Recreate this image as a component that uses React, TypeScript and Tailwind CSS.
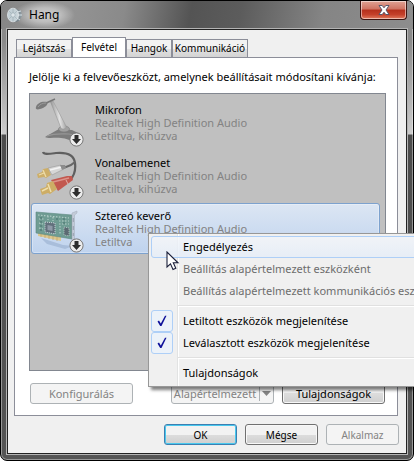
import React, { useState } from "react";
import clsx from "clsx";

type DeviceKind = "mic" | "line" | "card";

const tabs = [
  { id: "playback", label: "Lejátszás", width: "w-14" },
  { id: "recording", label: "Felvétel", width: "w-[54px]" },
  { id: "sounds", label: "Hangok", width: "w-[46px]" },
  { id: "communication", label: "Kommunikáció", width: "w-[76px]" },
];

const devices: { kind: DeviceKind; name: string; status: string }[] = [
  { kind: "mic", name: "Mikrofon", status: "Letiltva, kihúzva" },
  { kind: "line", name: "Vonalbemenet", status: "Letiltva, kihúzva" },
  { kind: "card", name: "Sztereó keverő", status: "Letiltva" },
];

const SpeakerIcon = () => (
  <svg width="16" height="16" viewBox="0 0 16 16" aria-hidden="true">
    <path d="M9 2 L14 4 L15 9 L12 14 L8 15 Z" fill="#6f7f88" />
    <path d="M10 5 L14 4 M11 8 L15 8 M10 11 L13 13" stroke="#cfdde3" strokeWidth="1" />
    <ellipse cx="6" cy="8" rx="5.5" ry="6.8" fill="#c3d0d6" stroke="#dfe6ea" strokeWidth="0.8" />
    <path d="M2 4 L10 12 M2 12 L10 4 M6 1.5 V14.5" stroke="#a3b2ba" strokeWidth="0.8" />
    <circle cx="6" cy="8" r="2.2" fill="#dde6ea" stroke="#94a4ac" strokeWidth="0.6" />
  </svg>
);

// Small round "disabled" badge in the corner of every device icon
const DisabledBadge = () => (
  <g>
    <circle cx="41.5" cy="41.5" r="6.6" fill="#ececec" stroke="#777" strokeWidth="1" />
    <path d="M39.5 37 H43.5 V41 H46 L41.5 46 L37 41 H39.5 Z" fill="#2d2d2d" />
  </g>
);

const MicArt = () => (
  <>
    <defs>
      <linearGradient id="neck" x1="0" x2="1" y1="0.4" y2="0.2">
        <stop offset="0" stopColor="#8a8a8a" />
        <stop offset="0.5" stopColor="#e2e2e2" />
        <stop offset="1" stopColor="#8a8a8a" />
      </linearGradient>
    </defs>
    <path d="M10 39 C15 36 20 33 24 31 L37 32 L45 36 L41 44 C36 43 31 40 26 40 C20 39 14 41 10 39 Z" fill="#7c7c7c" />
    <path d="M12 38 C20 35 28 36 34 36 L43 38" stroke="#969696" strokeWidth="1.2" fill="none" />
    <ellipse cx="29" cy="31" rx="5.5" ry="3" fill="#a2a2a2" stroke="#7a7a7a" strokeWidth="0.6" />
    <path d="M15.5 4 L18 3 L31.5 29 C30 31.5 27 31.5 26 30 Z" fill="url(#neck)" stroke="#919191" strokeWidth="0.5" />
    <path d="M9 6 L20 1" stroke="#767676" strokeWidth="1.5" />
    <path d="M1 9 C2 5 7 3 12 4 C14 6 10 10 5 11 C2 12 0 11 1 9 Z" fill="#7a7a7a" />
    <path d="M3 9 C5 6 8 5 11 5" stroke="#9a9a9a" strokeWidth="1" fill="none" />
  </>
);

const LineArt = () => (
  <>
    <path d="M8 1 C9 4 14 3 21 2 C33 1 39 4 40 12 C41 20 39 25 35 29" stroke="#5f5f5f" strokeWidth="2.2" fill="none" />
    <path d="M40 11 C36 15 33 15 28 17" stroke="#686868" strokeWidth="2" fill="none" />
    <path d="M13 17 L26 14 L29 18 L17 24 Z" fill="#d6d6d6" stroke="#999" strokeWidth="0.6" />
    <path d="M15 19 L27 16" stroke="#f4f4f4" strokeWidth="1.6" />
    <path d="M25 14 L30 14 L31 17 L27 19 Z" fill="#8c8c8c" />
    <path d="M2 23 L7 21 L8 18 L13 17 L16 24 L11 27 L9 26 L3 27 Z" fill="#cdae68" />
    <path d="M8 19 L11 26 M4 24 L9 22" stroke="#eddca8" strokeWidth="1.3" />
    <path d="M16 29 L32 25 L37 25 L38 29 L23 40 Z" fill="#c2584f" />
    <path d="M18 31 L34 27" stroke="#dc938b" strokeWidth="1.6" />
    <path d="M31 29 L33 33" stroke="#e2b0aa" strokeWidth="1" />
    <path d="M5 38 L11 36 L12 32 L18 30 L22 38 L15 43 L13 42 L7 44 Z" fill="#cdad65" />
    <path d="M13 33 L16 41 M7 40 L13 37" stroke="#efdfac" strokeWidth="1.5" />
  </>
);

const CardArt = () => (
  <>
    <path d="M6 34 L28 41 L38 42 L30 45 L12 40 Z" fill="#a9bedb" />
    <path d="M3 28 L26 33 V37 L3 32 Z" fill="#dcc78d" />
    <path d="M6 29 V33 M10 30 V34 M14 31 V35 M18 32 V36 M22 33 V37" stroke="#bda267" strokeWidth="0.7" />
    <path d="M1 8 L37 11 V35 L1 29 Z" fill="#6f9c93" stroke="#5c887f" strokeWidth="0.6" />
    <path d="M3 11 L34 14 M4 15 L9 15 M4 19 L8 20 M4 24 L8 25 M24 17 H34 M24 20 H34 M13 12 V16 M18 13 V17 M25 22 V30" stroke="#b7d0ca" strokeWidth="1.1" strokeDasharray="1.5 1.5" />
    <path d="M6 13 V27 M22 14 V18 M29 14 V21" stroke="#476f6a" strokeWidth="1" strokeDasharray="2 2" />
    <path d="M10 18 L20 19 V30 L10 28 Z" fill="#62707c" stroke="#ccd6da" strokeWidth="1" strokeDasharray="1 1" />
    <path d="M12.5 21 L17.5 22 V27 L12.5 26 Z" fill="#8f9aa8" />
    <path d="M29 23 L34 24 V32 L29 31 Z" fill="#5b6a72" stroke="#c5d2d2" strokeWidth="0.8" strokeDasharray="1 1" />
    <path d="M37 9 L42 7 V9 L39.5 11 V37 L37 38 Z" fill="#c3cbd8" stroke="#a0abba" strokeWidth="0.5" />
    <path d="M38.3 14 V18 M38.3 22 V26 M38.3 29 V32" stroke="#8a94a4" strokeWidth="0.8" />
  </>
);

const DeviceIcon = ({ kind }: { kind: DeviceKind }) => (
  <svg className="shrink-0" width="50" height="50" viewBox="0 0 50 50" fill="none" aria-hidden="true">
    {kind === "mic" && <MicArt />}
    {kind === "line" && <LineArt />}
    {kind === "card" && <CardArt />}
    <DisabledBadge />
  </svg>
);

const MousePointer = () => (
  <svg className="absolute left-[17px] top-[17px]" width="14" height="21" viewBox="0 0 14 21" aria-hidden="true">
    <path d="M1 1 V16 L4.5 12.8 L7 18.5 L9.8 17.2 L7.3 11.8 H12 Z" fill="#fff" stroke="#1b1f3a" strokeWidth="1.1" />
  </svg>
);

interface DialogButtonProps extends React.ButtonHTMLAttributes<HTMLButtonElement> {
  primary?: boolean;
}

const DialogButton: React.FC<DialogButtonProps> = ({ primary, className, disabled, ...rest }) => (
  <button
    type="button"
    disabled={disabled}
    className={clsx(
      "flex h-[21px] items-center justify-center rounded-[3px] border leading-4",
      disabled && "border-[#adb2b5] bg-[#f4f4f4] text-[#838383]",
      !disabled && "bg-linear-to-b from-[#f2f2f2] from-50% via-[#dddddd] via-50% to-[#cfcfcf] text-black",
      !disabled && (primary ? "border-[#3c7fb1] inset-ring inset-ring-[#48c8ee]" : "border-[#707070] inset-ring inset-ring-[#f8f8f8]"),
      className
    )}
    {...rest}
  />
);

const menuRow = "flex h-[22px] w-full items-center rounded-[3px] border pl-[31px] pr-6 text-left";

const MenuSeparator = () => (
  <div role="separator" className="flex h-2 items-center pl-[27px]">
    <div className="h-[2px] w-full border-b border-white bg-[#e0e0e0]" />
  </div>
);

interface MenuCheckProps {
  label: string;
  checked: boolean;
  onChange: (value: boolean) => void;
}

const MenuCheck: React.FC<MenuCheckProps> = ({ label, checked, onChange }) => (
  <label className="flex h-[22px] items-center gap-[10px] pr-6">
    <span className="grid">
      <input
        type="checkbox"
        checked={checked}
        onChange={(e) => onChange(e.target.checked)}
        className="col-start-1 row-start-1 size-[22px] appearance-none rounded-[3px] border border-transparent checked:border-[#aecff7] checked:bg-[#ecf2f9]"
      />
      {checked && (
        <svg className="pointer-events-none col-start-1 row-start-1 m-auto" width="10" height="12" viewBox="0 0 10 12" aria-hidden="true">
          <path d="M0.5 6.5 L2 5.5 L3.8 8.5 L8 0.8 L9.5 0.8 L4.5 11 H3.2 Z" fill="#10129a" />
        </svg>
      )}
    </span>
    {label}
  </label>
);

const ContextMenu = () => {
  const [showDisabled, setShowDisabled] = useState(true);
  const [showDisconnected, setShowDisconnected] = useState(true);

  return (
    <div className="absolute left-[116px] top-[29px] z-10 w-max border border-[#979797] bg-[#f0f0f0] bg-[linear-gradient(to_right,transparent_28px,#e2e3e3_28px,#e2e3e3_29px,#ffffff_29px,#ffffff_30px,transparent_30px)] p-[2px] text-black shadow-[3px_3px_3px_rgba(0,0,0,0.5)]">
      <button type="button" className={clsx(menuRow, "border-[#aecff7] bg-linear-to-b from-[#f1f4f9]/80 to-[#e5edf8]/80")}>
        Engedélyezés
      </button>
      <button type="button" disabled className={clsx(menuRow, "border-transparent text-[#6d6d6d]")}>
        Beállítás alapértelmezett eszközként
      </button>
      <button type="button" disabled className={clsx(menuRow, "border-transparent text-[#6d6d6d]")}>
        Beállítás alapértelmezett kommunikációs eszközként
      </button>
      <MenuSeparator />
      <MenuCheck label="Letiltott eszközök megjelenítése" checked={showDisabled} onChange={setShowDisabled} />
      <MenuCheck label="Leválasztott eszközök megjelenítése" checked={showDisconnected} onChange={setShowDisconnected} />
      <MenuSeparator />
      <button type="button" className={clsx(menuRow, "border-transparent")}>
        Tulajdonságok
      </button>
      <MousePointer />
    </div>
  );
};

const TitleBar = () => (
  <header className="flex h-7 items-start justify-between rounded-t-[6px] bg-[linear-gradient(100deg,#858585_0%,#959595_15%,#8a8a8a_30%,#545454_46%,#5c5c5c_58%,#858585_78%,#8d8d8d_100%)] px-[6px]">
    <div className="flex h-7 items-center gap-[6px]">
      <SpeakerIcon />
      <h1 className="-mx-4 bg-[radial-gradient(closest-side,rgba(255,255,255,0.55),rgba(255,255,255,0.4)_50%,transparent)] px-4 py-1 text-[12px] leading-5">
        Hang
      </h1>
    </div>
    <button
      type="button"
      aria-label="Bezárás"
      className="flex h-[19px] w-[47px] items-center justify-center rounded-b-[4px] border border-t-0 border-[#3d1512] bg-[linear-gradient(#e0a294_0%,#cf7362_45%,#b5301c_50%,#c4402a_75%,#e07a5e_100%)] inset-ring inset-ring-white/50"
    >
      <svg width="12" height="10" viewBox="0 0 12 10" aria-hidden="true">
        <path
          d="M1 0.5 H4.2 L6 2.8 L7.8 0.5 H11 L8 5 L11 9.5 H7.8 L6 7.2 L4.2 9.5 H1 L4 5 Z"
          fill="#fff"
          stroke="#4a4f66"
          strokeWidth="0.9"
        />
      </svg>
    </button>
  </header>
);

export default function App() {
  const [activeTab, setActiveTab] = useState("recording");

  return (
    <div className="min-h-screen overflow-hidden bg-white font-['Noto_Sans',sans-serif] text-[11px] whitespace-nowrap text-black">
      <div className="flex min-h-screen flex-col rounded-[7px] border border-black bg-[linear-gradient(#8a8a8a_0px,#8a8a8a_40px,#cccccc_133px,#4c4c4c_134px,#555555_100%)] inset-ring inset-ring-white/40">
        <TitleBar />

        <div className="mx-[6px] mb-[6px] flex flex-1 flex-col border border-[#222] bg-[#f0f0f0] pt-[7px] pr-[7px] pb-2 pl-[6px] ring ring-[#b4b4b4]">
          <div role="tablist" className="flex h-5 items-end pl-[2px] text-[10px]">
            {tabs.map((tab) => (
              <button
                key={tab.id}
                type="button"
                role="tab"
                aria-selected={tab.id === activeTab}
                onClick={() => setActiveTab(tab.id)}
                className={clsx(
                  "flex items-center justify-center border border-b-0 border-[#8c8e99]",
                  tab.width,
                  tab.id === activeTab
                    ? "-mb-px h-[21px] bg-white pb-px"
                    : "h-[18px] bg-linear-to-b from-[#f2f2f2] from-50% via-[#e2e2e2] via-50% to-[#d3d3d3]"
                )}
              >
                {tab.label}
              </button>
            ))}
          </div>

          <main className="mr-px flex flex-1 flex-col border border-[#8c8e99] bg-white pt-[10px] pr-[11px] pb-[11px] pl-[14px]">
            <p id="device-hint" className="leading-[18px]">
              Jelölje ki a felvevőeszközt, amelynek beállításait módosítani kívánja:
            </p>

            <ul
              role="listbox"
              aria-labelledby="device-hint"
              className="mt-[7px] flex min-h-[278px] flex-1 flex-col gap-[2px] border border-[#828790] bg-[#c0c0c0] pt-[3px] pr-[5px] pl-px"
            >
              {devices.map((device) => {
                const selected = device.kind === "card";
                return (
                  <li
                    key={device.kind}
                    role="option"
                    aria-selected={selected}
                    className={clsx(
                      "relative flex h-[51px] items-center gap-[10px] rounded-[3px] border pl-[3px]",
                      selected
                        ? "border-[#7da2ce] bg-linear-to-b from-[#dce6f3] to-[#bfd3ee] inset-ring inset-ring-white/30"
                        : "border-transparent"
                    )}
                  >
                    <DeviceIcon kind={device.kind} />
                    <div className="leading-[13px] text-[#838383]">
                      <div className="text-black">{device.name}</div>
                      <div>Realtek High Definition Audio</div>
                      <div>{device.status}</div>
                    </div>
                    {selected && <ContextMenu />}
                  </li>
                );
              })}
            </ul>

            <div className="mt-3 flex justify-between px-px">
              <DialogButton disabled className="w-[103px]">
                Konfigurálás
              </DialogButton>
              <div className="flex gap-2">
                <DialogButton disabled className="w-[103px] gap-[3px]">
                  Alapértelmezett
                  <span className="flex h-[15px] items-center border-l border-[#adb2b5] pl-[2px]">
                    <svg width="9" height="5" viewBox="0 0 9 5" aria-hidden="true">
                      <path d="M0 0 H9 L4.5 5 Z" fill="#838383" />
                    </svg>
                  </span>
                </DialogButton>
                <DialogButton className="w-[103px]">Tulajdonságok</DialogButton>
              </div>
            </div>
          </main>

          <footer className="mt-2 flex justify-end gap-2 text-[10px]">
            <DialogButton primary className="w-[73px]">
              OK
            </DialogButton>
            <DialogButton className="w-[73px]">Mégse</DialogButton>
            <DialogButton disabled className="w-[73px]">
              Alkalmaz
            </DialogButton>
          </footer>
        </div>
      </div>
    </div>
  );
}
